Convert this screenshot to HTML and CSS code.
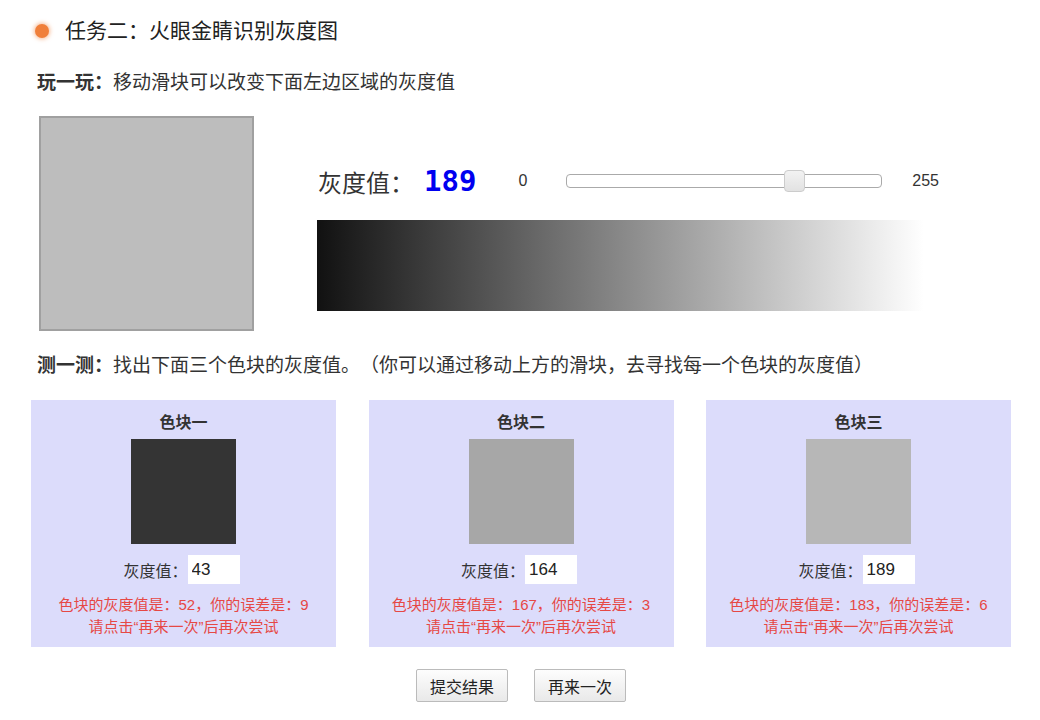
FILE: index.html
```html
<!DOCTYPE html>
<html>
<head>
    <meta charset="utf-8">
    <title>任务二：火眼金睛识别灰度图</title>
    <link rel="stylesheet" href="styles.css">
</head>
<body>
    <div class="page">
        <h1 class="task-title"><span class="dot"></span>任务二：火眼金睛识别灰度图</h1>

        <!-- 玩一玩 -->
        <p class="intro"><b>玩一玩：</b>移动滑块可以改变下面左边区域的灰度值</p>
        <div class="play">
            <div id="preview" class="preview" style="background-color: rgb(189, 189, 189);"></div>
            <div class="play-right">
                <div class="slider-row">
                    <span class="big-label">灰度值：</span>
                    <span id="grayValue" class="big-value">189</span>
                    <span class="range-min">0</span>
                    <input id="graySlider" class="slider" type="range" min="0" max="255" value="189">
                    <span class="range-max">255</span>
                </div>
                <div class="gradient"></div>
            </div>
        </div>

        <!-- 测一测 -->
        <p class="intro"><b>测一测：</b>找出下面三个色块的灰度值。（你可以通过移动上方的滑块，去寻找每一个色块的灰度值）</p>
        <div class="cards">
            <div class="card">
                <div class="card-title">色块一</div>
                <div class="swatch" style="background-color: rgb(52, 52, 52);"></div>
                <div class="answer">灰度值：<input class="answer-input" type="text" value="43"></div>
                <div class="result">色块的灰度值是：52，你的误差是：9<br>请点击“再来一次”后再次尝试</div>
            </div>
            <div class="card">
                <div class="card-title">色块二</div>
                <div class="swatch" style="background-color: rgb(167, 167, 167);"></div>
                <div class="answer">灰度值：<input class="answer-input" type="text" value="164"></div>
                <div class="result">色块的灰度值是：167，你的误差是：3<br>请点击“再来一次”后再次尝试</div>
            </div>
            <div class="card">
                <div class="card-title">色块三</div>
                <div class="swatch" style="background-color: rgb(183, 183, 183);"></div>
                <div class="answer">灰度值：<input class="answer-input" type="text" value="189"></div>
                <div class="result">色块的灰度值是：183，你的误差是：6<br>请点击“再来一次”后再次尝试</div>
            </div>
        </div>

        <div class="actions">
            <button class="btn">提交结果</button>
            <button class="btn">再来一次</button>
        </div>
    </div>

    <script>
        const slider = document.getElementById('graySlider');
        slider.oninput = function() {
            const v = this.value;
            document.getElementById('grayValue').innerText = v;
            document.getElementById('preview').style.backgroundColor = `rgb(${v}, ${v}, ${v})`;
        };
    </script>
</body>
</html>
```

FILE: styles.css
```css
body { margin: 0; background: #fff; color: #333; font-family: "Liberation Sans", "Noto Sans CJK SC", sans-serif; text-spacing-trim: space-all; }
.page { width: 980px; margin-left: 31px; padding-top: 18px; }

.task-title { display: flex; align-items: center; margin: 0; font-size: 21px; font-weight: normal; color: #222; line-height: 26px; }
.dot {
    width: 14px;
    height: 14px;
    border-radius: 50%;
    background: #f07f3a;
    box-shadow: 0 0 4px 1px rgba(240, 127, 58, 0.55);
    margin-left: 4px;
    margin-right: 16px;
}

.intro { margin: 0; padding-left: 6px; font-size: 19px; line-height: 26px; }
.intro b { color: #333; }
.page > .intro:nth-of-type(1) { margin-top: 26px; }

.play { display: flex; margin-top: 20px; margin-bottom: 22px; }
.preview { width: 211px; height: 211px; border: 2px solid #a0a0a0; margin-left: 8px; }
.play-right { margin-left: 63px; padding-top: 45px; }

.slider-row { display: flex; align-items: center; height: 40px; }
.big-label { font-size: 24px; margin-left: 1px; color: #333; }
.big-value { font-family: "DejaVu Sans Mono", monospace; font-weight: bold; font-size: 29px; color: #0000f0; margin-left: 10px; }
.range-min, .range-max { font-size: 16px; color: #333; }
.range-min { margin-left: 42px; }
.range-max { margin-left: 30px; }

.slider {
    -webkit-appearance: none;
    appearance: none;
    width: 316px;
    height: 22px;
    margin: 0 0 0 39px;
    background: transparent;
}
.slider::-webkit-slider-runnable-track {
    height: 14px;
    background: #fff;
    border: 1px solid #aaa;
    border-radius: 4px;
    box-sizing: border-box;
}
.slider::-webkit-slider-thumb {
    -webkit-appearance: none;
    width: 21px;
    height: 22px;
    margin-top: -5px;
    border: 1px solid #ccc;
    border-radius: 4px;
    background: linear-gradient(#f2f2f2, #e2e2e2);
    box-sizing: border-box;
}

.gradient { width: 613px; height: 91px; margin-top: 19px; background: linear-gradient(to right, #111, #fff 99%); }

.cards { display: flex; justify-content: space-between; margin-top: 21px; }
.card { width: 305px; background: #dcdcfb; text-align: center; padding: 11px 0 9px; }
.card-title { font-size: 16px; font-weight: bold; line-height: 24px; }
.swatch { width: 105px; height: 105px; margin: 4px auto 0; }
.answer { margin-top: 11px; font-size: 16px; display: flex; justify-content: center; align-items: center; margin-right: 4px; }
.answer-input { width: 52px; height: 29px; box-sizing: border-box; border: 1px solid #fff; padding: 0 0 0 3px; font-family: "Liberation Sans", sans-serif; font-size: 17px; color: #222; outline: none; }
.result { margin-top: 10px; font-size: 15px; line-height: 22px; color: #e64845; }

.actions { display: flex; justify-content: center; gap: 26px; margin-top: 22px; }
.btn {
    width: 92px;
    height: 33px;
    font-family: "Liberation Sans", "Noto Sans CJK SC", sans-serif;
    font-size: 16px;
    color: #222;
    border: 1px solid #bbb;
    border-radius: 2px;
    background: linear-gradient(#fdfdfd, #e9e9e9);
    cursor: pointer;
}
```
